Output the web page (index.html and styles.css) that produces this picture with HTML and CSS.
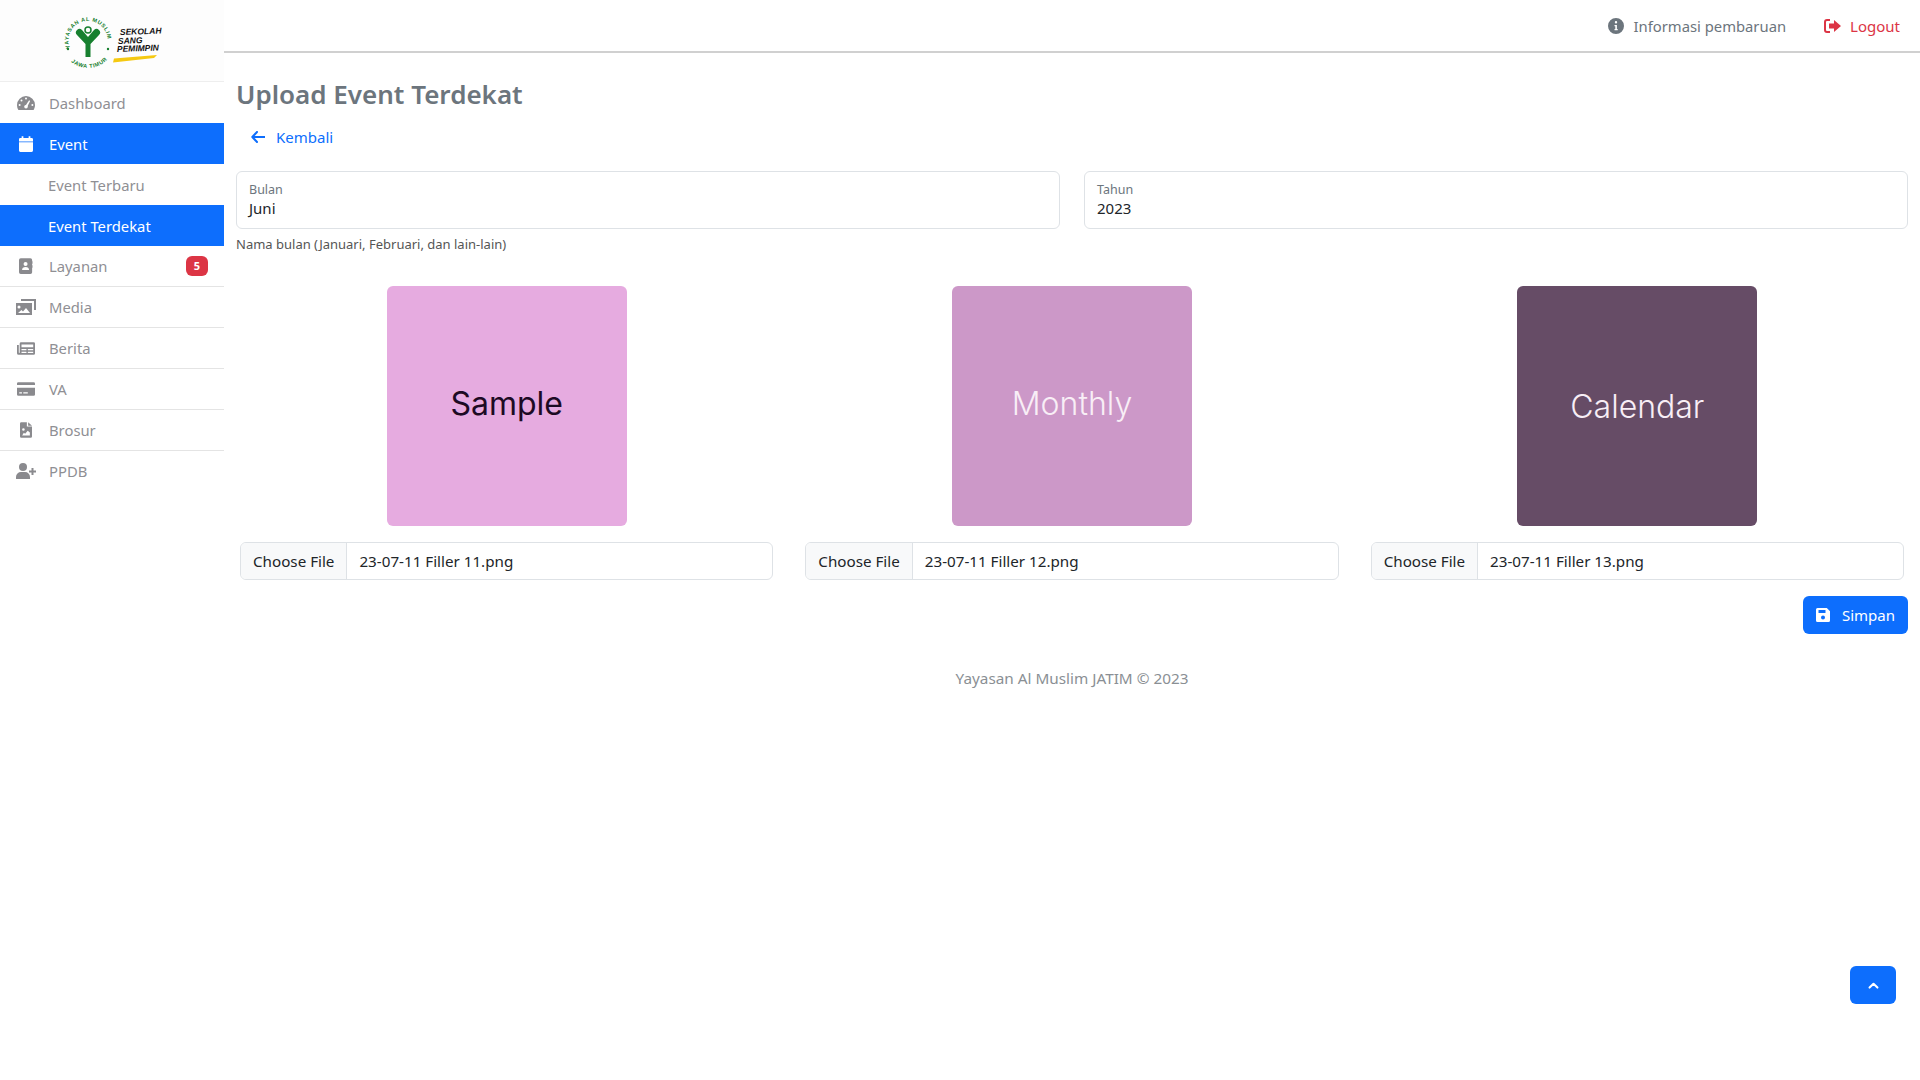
FILE: index.html
```html
<!DOCTYPE html>
<html lang="en">
<head>
<meta charset="UTF-8">
<title>Upload Event Terdekat</title>
<link rel="stylesheet" href="styles.css">
</head>
<body>
<div class="sidebar">
    <div class="logo">
        <svg width="120" height="66" viewBox="0 0 120 66">
            <defs>
                <path id="ring" d="M19 40 A19.500 19.500 0 1 1 55 40"/>
                <path id="ring-low" d="M13 44 A26 26 0 0 0 61 44"/>
            </defs>
            <text class="logo-ring"><textPath href="#ring" startOffset="0">YAYASAN AL MUSLIM</textPath></text>
            <text class="logo-ring"><textPath href="#ring-low" startOffset="12">JAWA TIMUR</textPath></text>
            <path d="M34.500 49V36L26 27a3.500 3.500 0 0 1 5-5l6 7 6-7a3.500 3.500 0 0 1 5 5L39.500 36v13z" fill="#17802f"/>
            <circle cx="37" cy="22" r="3" fill="none" stroke="#17802f" stroke-width="1.500"/>
            <circle cx="17" cy="41" r="1.200" fill="#17802f"/>
            <circle cx="57" cy="41" r="1.200" fill="#17802f"/>
            <text class="logo-word" x="69" y="27" transform="rotate(-2 69 27)">SEKOLAH</text>
            <text class="logo-word" x="67" y="36" transform="rotate(-2 67 36)">SANG</text>
            <text class="logo-word" x="66" y="44" transform="rotate(-2 66 44)">PEMIMPIN</text>
            <path d="M62 54.500l1-4 43-3.500-3 3z" fill="#f5c911"/>
        </svg>
    </div>
    <ul class="menu">
        <li><a href="#"><span class="menu-icon"><svg viewBox="0 0 18 14" width="18" height="14"><path d="M9 0a9 9 0 0 1 9 9c0 1.800-.5 3.500-1.400 5H1.400A9 9 0 0 1 0 9a9 9 0 0 1 9-9z" fill="#8a8a8e"/><g fill="#fff"><circle cx="9" cy="2.600" r="1"/><circle cx="4.500" cy="4.500" r="1"/><circle cx="2.600" cy="9" r="1"/><circle cx="15.400" cy="9" r="1"/><circle cx="9" cy="10.800" r="1.800"/><path d="M8.300 10 12.100 4.300l1 .6-3 6z"/></g></svg></span>Dashboard</a></li>
        <li class="active"><a href="#"><span class="menu-icon"><svg viewBox="0 0 16 18" width="14" height="16"><path d="M3 0h2v2h6V0h2v2h1.500A1.500 1.500 0 0 1 16 3.500V6H0V3.500A1.500 1.500 0 0 1 1.500 2H3zM0 7h16v9.500a1.500 1.500 0 0 1-1.500 1.500h-13A1.500 1.500 0 0 1 0 16.500z" fill="#fff"/></svg></span>Event</a></li>
        <li class="sub"><a href="#">Event Terbaru</a></li>
        <li class="sub active"><a href="#">Event Terdekat</a></li>
        <li><a href="#"><span class="menu-icon"><svg viewBox="0 0 16 18" width="14" height="16"><path d="M2 0h11a2 2 0 0 1 2 2v14a2 2 0 0 1-2 2H2a2 2 0 0 1-2-2V2a2 2 0 0 1 2-2zm5.500 4.500a2.300 2.300 0 1 0 0 4.600 2.300 2.300 0 0 0 0-4.600zM3.500 13.500h8c0-2-1.500-3.300-4-3.300s-4 1.300-4 3.300z" fill="#8a8a8e" fill-rule="evenodd"/><path d="M15.500 3.500H16v3h-.5zM15.500 8H16v3h-.5z" fill="#8a8a8e"/></svg></span>Layanan<span class="badge">5</span></a></li>
        <li><a href="#"><span class="menu-icon"><svg viewBox="0 0 20 16" width="20" height="16"><path d="M5 0h15v11h-2V2H5z" fill="#8a8a8e"/><path d="M0 4h16v12H0zm3 2.500a1.500 1.500 0 1 0 0 3 1.500 1.500 0 0 0 0-3zM2 14h12l-4-5-3 3.500-1.500-1.500z" fill="#8a8a8e" fill-rule="evenodd"/></svg></span>Media</a></li>
        <li><a href="#"><span class="menu-icon"><svg viewBox="0 0 20 14" width="18" height="13"><path d="M3 1.500A1.500 1.500 0 0 1 4.500 0h14A1.500 1.500 0 0 1 20 1.500v11a1.500 1.500 0 0 1-1.500 1.500H1.800A1.800 1.800 0 0 1 0 12.200V3h2v8.500a.5.5 0 0 0 1 0zM5 2.500v3h13v-3zM5 7.500V9h5.500V7.500zM12 7.500V9h6V7.500zM5 10.500V12h5.500v-1.500zM12 10.500V12h6v-1.500z" fill="#8a8a8e" fill-rule="evenodd"/></svg></span>Berita</a></li>
        <li><a href="#"><span class="menu-icon"><svg viewBox="0 0 20 15" width="18" height="14"><path d="M1.500 0h17A1.500 1.500 0 0 1 20 1.500V3H0V1.500A1.500 1.500 0 0 1 1.500 0zM0 6h20v7.500a1.500 1.500 0 0 1-1.500 1.500h-17A1.500 1.500 0 0 1 0 13.500zm2.500 5v1.500h3V11zm4.500 0v1.500h5V11z" fill="#8a8a8e" fill-rule="evenodd"/></svg></span>VA</a></li>
        <li><a href="#"><span class="menu-icon"><svg viewBox="0 0 14 18" width="12" height="16"><path d="M1.500 0H8v5h6v11.500a1.500 1.500 0 0 1-1.500 1.500h-11A1.500 1.500 0 0 1 0 16.500v-15A1.500 1.500 0 0 1 1.500 0zM4 7a1.500 1.500 0 1 0 0 3 1.500 1.500 0 0 0 0-3zM2.500 15.500h9V12l-2.500-2-3 3.500-1.500-1.200zM9.500 0 14 4H9.500z" fill="#8a8a8e" fill-rule="evenodd"/></svg></span>Brosur</a></li>
        <li><a href="#"><span class="menu-icon"><svg viewBox="0 0 20 16" width="20" height="16"><circle cx="7" cy="4" r="4" fill="#8a8a8e"/><path d="M0 16v-2a5 5 0 0 1 5-5h4a5 5 0 0 1 5 5v2zM15.500 5h2v2.500H20v2h-2.500V12h-2V9.500H13v-2h2.500z" fill="#8a8a8e"/></svg></span>PPDB</a></li>
    </ul>
</div>

<div class="main">
    <div class="topbar">
        <a class="top-link" href="#">
            <svg viewBox="0 0 16 16" width="16" height="16"><path d="M8 0a8 8 0 1 1 0 16A8 8 0 0 1 8 0zm0 3a1.200 1.200 0 1 0 0 2.400A1.200 1.200 0 0 0 8 3zM6.500 7v1.200h.8v2.900h-.8v1.200h3.200v-1.200h-.8V7z" fill="#6c757d" fill-rule="evenodd"/></svg>
            Informasi pembaruan
        </a>
        <a class="top-link logout" href="#">
            <svg viewBox="0 0 17 14" width="17" height="14"><path d="M6 0v2H3a1 1 0 0 0-1 1v8a1 1 0 0 0 1 1h3v2H3a3 3 0 0 1-3-3V3a3 3 0 0 1 3-3zM10 1l7 6-7 6V9.500H5v-5h5z" fill="#dc3545"/></svg>
            Logout
        </a>
    </div>

    <div class="content">
        <h1>Upload Event Terdekat</h1>
        <a class="back" href="#">
            <svg viewBox="0 0 14 12" width="14" height="12"><path d="M6 1 1.300 6 6 11M1.500 6H13.500" fill="none" stroke="#0d6efd" stroke-width="2" stroke-linecap="round" stroke-linejoin="round"/></svg>
            Kembali
        </a>

        <div class="fields">
            <div>
                <div class="float-field"><label>Bulan</label><span>Juni</span></div>
                <div class="help">Nama bulan (Januari, Februari, dan lain-lain)</div>
            </div>
            <div>
                <div class="float-field"><label>Tahun</label><span>2023</span></div>
            </div>
        </div>

        <div class="uploads">
            <div class="upload">
                <div class="preview pink"><span>Sample</span></div>
                <div class="file-input"><span class="file-btn">Choose File</span><span class="file-name">23-07-11 Filler 11.png</span></div>
            </div>
            <div class="upload">
                <div class="preview mauve"><span>Monthly</span></div>
                <div class="file-input"><span class="file-btn">Choose File</span><span class="file-name">23-07-11 Filler 12.png</span></div>
            </div>
            <div class="upload">
                <div class="preview plum"><span class="low">Calendar</span></div>
                <div class="file-input"><span class="file-btn">Choose File</span><span class="file-name">23-07-11 Filler 13.png</span></div>
            </div>
        </div>

        <div class="actions">
            <button class="btn-save">
                <svg viewBox="0 0 14 14" width="14" height="14"><path d="M1.500 0h9.300L14 3.200v9.300a1.500 1.500 0 0 1-1.500 1.500h-11A1.500 1.500 0 0 1 0 12.500v-11A1.500 1.500 0 0 1 1.500 0zM2.500 2v3h7V2zM7 7.500a2 2 0 1 0 0 4 2 2 0 0 0 0-4z" fill="#fff" fill-rule="evenodd"/></svg>
                Simpan
            </button>
        </div>

        <div class="footer">Yayasan Al Muslim JATIM © 2023</div>
    </div>
</div>

<a class="to-top" href="#">
    <svg viewBox="0 0 12 8" width="11" height="7"><path d="M1.500 6.300 6 2l4.500 4.300" fill="none" stroke="#fff" stroke-width="2.400" stroke-linecap="round" stroke-linejoin="round"/></svg>
</a>
</body>
</html>
```

FILE: styles.css
```css
body {
    font-family: "Noto Sans", Arial, sans-serif;
    font-size: 15px;
    margin: 0;
    padding: 0;
    color: #212529;
    background-color: #fff;
    display: flex;
    min-height: 1080px;
}
a {
    text-decoration: none;
}

.sidebar {
    width: 224px;
    flex-shrink: 0;
}
.logo {
    height: 82px;
    box-sizing: border-box;
    padding-top: 8px;
    padding-left: 51px;
    background-color: #fdfdfd;
    border-bottom: 1px solid #eee;
}
.logo svg {
    overflow: visible;
}
.logo-ring {
    font-family: "Liberation Sans", sans-serif;
    font-size: 5.500px;
    font-weight: bold;
    letter-spacing: 0.600px;
    fill: #17802f;
}
.logo-word {
    font-family: "Liberation Sans", sans-serif;
    font-size: 8.500px;
    font-weight: bold;
    font-style: italic;
    fill: #111;
}
.menu {
    list-style-type: none;
    margin: 0;
    padding: 0;
    font-size: 14.800px;
}
.menu li a {
    display: flex;
    align-items: center;
    height: 41px;
    box-sizing: border-box;
    color: #8f8f94;
}
.menu li {
    border-bottom: 1px solid #e4e4e4;
}
.menu li:nth-child(-n+4), .menu li:last-child {
    border-bottom: none;
}
.menu li:nth-child(n+5) a {
    height: 40px;
}
.menu li.active {
    background-color: #0d6efd;
}
.menu li.active a {
    color: #fff;
}
.menu li.sub a {
    padding-left: 48px;
}
.menu-icon {
    width: 49px;
    padding-left: 3px;
    box-sizing: border-box;
    display: flex;
    justify-content: center;
    flex-shrink: 0;
}
.badge {
    margin-left: auto;
    margin-right: 16px;
    background-color: #dc3545;
    color: #fff;
    font-size: 11px;
    font-weight: 700;
    width: 22px;
    height: 20px;
    line-height: 20px;
    text-align: center;
    border-radius: 6px;
}

.main {
    flex: 1;
    min-width: 0;
}
.topbar {
    height: 53px;
    box-sizing: border-box;
    border-bottom: 2px solid #d0d0d0;
    display: flex;
    justify-content: flex-end;
    align-items: center;
    gap: 38px;
    padding-right: 20px;
}
.top-link {
    display: flex;
    align-items: center;
    gap: 9px;
    color: #6c757d;
    font-size: 14.800px;
}
.logout {
    color: #dc3545;
    font-size: 15px;
}

.content {
    padding: 0 12px;
}
h1 {
    font-size: 26px;
    font-weight: 600;
    color: #6c757d;
    margin: 0;
    padding-top: 24px;
    line-height: 35px;
}
.back {
    display: inline-flex;
    align-items: center;
    gap: 11px;
    color: #0d6efd;
    margin-top: 14px;
    margin-left: 15px;
    height: 22px;
}
.fields {
    display: grid;
    grid-template-columns: 1fr 1fr;
    gap: 24px;
    margin-top: 23px;
}
.float-field {
    height: 58px;
    box-sizing: border-box;
    border: 1px solid #dee2e6;
    border-radius: 6px;
    padding: 9px 12px;
    display: flex;
    flex-direction: column;
}
.float-field label {
    font-size: 12.500px;
    color: #6c757d;
    line-height: 17px;
}
.float-field span {
    line-height: 20px;
}
.help {
    font-size: 13px;
    color: #555;
    margin-top: 6px;
    line-height: 18px;
}

.uploads {
    display: grid;
    grid-template-columns: repeat(3, 1fr);
    gap: 32px;
    padding: 0 4px;
    margin-top: 33px;
}
.upload {
    display: flex;
    flex-direction: column;
    align-items: center;
    gap: 16px;
}
.preview {
    width: 240px;
    height: 240px;
    border-radius: 6px;
    display: flex;
    align-items: center;
    justify-content: center;
    font-family: Inter, sans-serif;
    font-size: 32px;
    font-weight: 300;
}
.preview span {
    margin-top: -5px;
}
.preview span.low {
    margin-top: 0;
}
.pink {
    background-color: #e6abe0;
    color: #1d0a24;
    font-weight: 400;
}
.mauve {
    background-color: #cc98c8;
    color: #f8eef6;
}
.plum {
    background-color: #664c66;
    color: #f8eef6;
}
.file-input {
    width: 100%;
    height: 38px;
    box-sizing: border-box;
    border: 1px solid #dee2e6;
    border-radius: 6px;
    display: flex;
    align-items: center;
    overflow: hidden;
    font-size: 15.200px;
}
.file-btn {
    height: 100%;
    display: flex;
    align-items: center;
    padding: 0 12px;
    background-color: #f8f9fa;
    border-right: 1px solid #dee2e6;
}
.file-name {
    padding-left: 12px;
}

.actions {
    display: flex;
    justify-content: flex-end;
    margin-top: 16px;
}
.btn-save {
    display: flex;
    align-items: center;
    gap: 12px;
    height: 38px;
    padding: 0 13px;
    border: none;
    border-radius: 6px;
    background-color: #0d6efd;
    color: #fff;
    font-family: inherit;
    font-size: 15px;
}
.footer {
    text-align: center;
    color: #8a8f94;
    margin-top: 34px;
    line-height: 20px;
    font-size: 15.300px;
}

.to-top {
    position: fixed;
    right: 24px;
    bottom: 76px;
    width: 46px;
    height: 38px;
    display: flex;
    align-items: center;
    justify-content: center;
    border-radius: 6px;
    background-color: #0d6efd;
}
```
